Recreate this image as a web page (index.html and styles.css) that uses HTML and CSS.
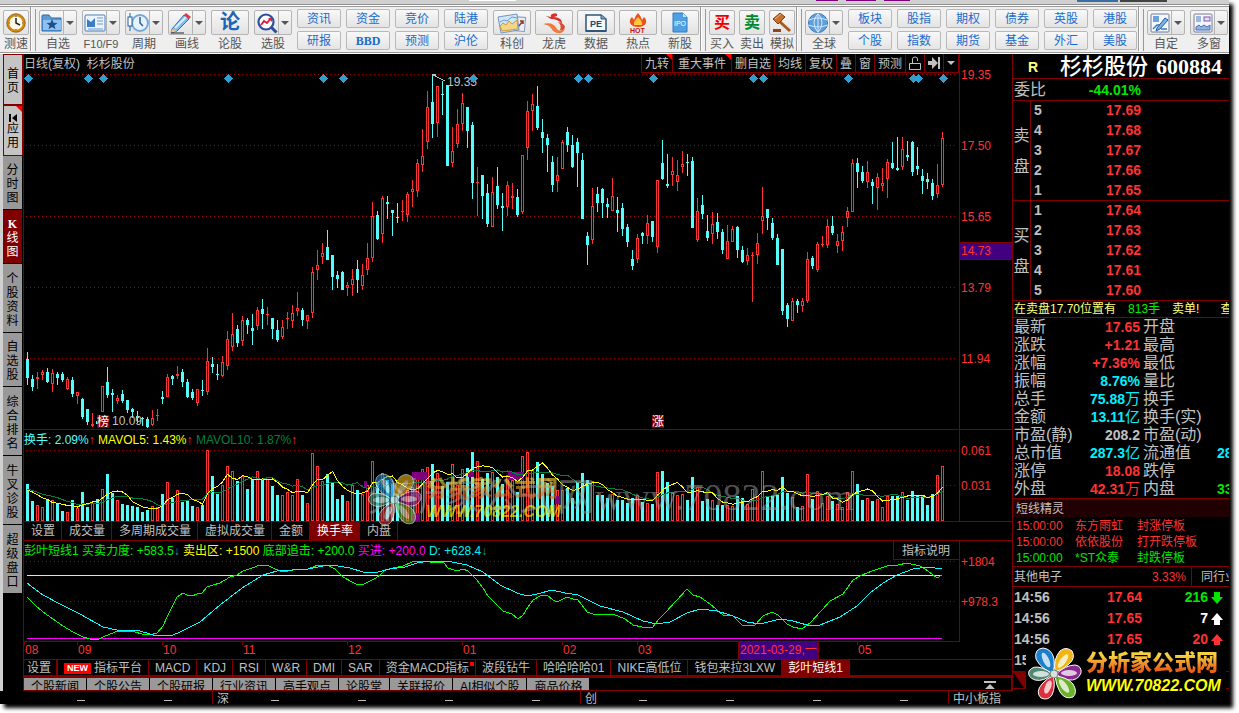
FILE: index.html
```html
<!DOCTYPE html>
<html lang="zh-CN">
<head>
    <meta charset="UTF-8">
    <meta name="viewport" content="width=device-width, initial-scale=1.0">
    <title>杉杉股份 600884</title>
    <link rel="stylesheet" href="styles.css">
</head>
<body>
<div class="window">
    <div class="strip"></div>

    <header class="toolbar">
        <button class="tool narrow">
            <span class="tool-face"><svg width="20" height="20" viewBox="0 0 20 20"><circle cx="10" cy="10" r="8" fill="#fffbe8" stroke="#d08a10" stroke-width="2.5"/><circle cx="10" cy="10" r="9.3" fill="none" stroke="#7a4a00" stroke-width=".7"/><path d="M10 5v5l4 2" fill="none" stroke="#222" stroke-width="1.5"/><path d="M10 3v1M10 16v1M3 10h1M16 10h1" stroke="#555"/></svg></span>
            <span class="tool-label">测速</span>
        </button>
        <i class="sep"></i>
        <div class="tools">
            <button class="tool split">
                <span class="tool-face"><svg width="22" height="20" viewBox="0 0 22 20"><path d="M1 3q0-1 1-1h6l2 3h10v13H1z" fill="#5b9bd8" stroke="#2b68ab"/><path d="M2 7h18v10H2z" fill="#8fc1ee"/><path d="M11 6l1.5 3.7 4 .2-3.1 2.5 1.1 3.9-3.500-2.200-3.500 2.200 1.100-3.900-3.100-2.500 4-.2z" fill="#1e4f8c"/></svg></span>
                <span class="tool-label">自选</span>
            </button>
            <button class="tool split">
                <span class="tool-face"><svg width="22" height="20" viewBox="0 0 22 20"><rect x="1" y="2" width="20" height="16" rx="1" fill="#eaf4ff" stroke="#4a80bd"/><path d="M3 14V6l4 3 4-4v9z" fill="#3d7cc4"/><path d="M13 5h6M13 8h6M13 11h6M4 16h15" stroke="#7898bd"/></svg></span>
                <span class="tool-label latin">F10/F9</span>
            </button>
            <button class="tool split">
                <span class="tool-face"><svg width="22" height="22" viewBox="0 0 22 22"><circle cx="13" cy="11" r="8" fill="#e6f3ff" stroke="#76a9d8" stroke-width="2"/><path d="M13 5v6l3 3" fill="none" stroke="#2b5f98" stroke-width="1.5"/><path d="M3 1v18" stroke="#1f5fae"/><rect x="1" y="5" width="4" height="9" fill="#fff" stroke="#1f5fae"/></svg></span>
                <span class="tool-label">周期</span>
            </button>
            <button class="tool split">
                <span class="tool-face"><svg width="22" height="22" viewBox="0 0 22 22"><path d="M2 17L14 3l5 4L7 19l-6 2z" fill="#87bbea" stroke="#376da6"/><path d="M5 16L16 5" stroke="#d9efff" stroke-width="2"/><path d="M14 3l2-2 5 4-2 2z" fill="#e03a3a"/><path d="M2 17l5 2-6 2z" fill="#f0c890"/><path d="M1 21h13" stroke="#222"/></svg></span>
                <span class="tool-label">画线</span>
            </button>
            <button class="tool">
                <span class="tool-face glyph blue">论</span>
                <span class="tool-label">论股</span>
            </button>
            <button class="tool split">
                <span class="tool-face"><svg width="22" height="22" viewBox="0 0 22 22"><circle cx="10" cy="10" r="7.5" fill="#fff" stroke="#2b4fa0" stroke-width="2.2"/><path d="M15.5 15.5l5 5" stroke="#2b4fa0" stroke-width="3"/><path d="M5 13l3-4 3 2 4-5" fill="none" stroke="#d81e3a" stroke-width="2"/><path d="M12 6h4v4z" fill="#d81e3a"/></svg></span>
                <span class="tool-label">选股</span>
            </button>
        </div>
        <div class="links">
            <button>资讯</button><button>资金</button><button>竞价</button><button>陆港</button>
            <button>研报</button><button class="serif">BBD</button><button>预测</button><button>沪伦</button>
        </div>
        <div class="tools tight">
            <button class="tool">
                <span class="tool-face"><svg width="30" height="22" viewBox="0 0 30 22"><rect x="17" y="5" width="11" height="14" fill="#e8eef6" stroke="#8a9bb5" transform="rotate(5 22 12)"/><path d="M21 15l5-6m-3 0h3v3" fill="none" stroke="#8d3a2a" stroke-width="1.5"/><path d="M1 5l19-3 2 16-18 3z" fill="#cfe6fb" stroke="#7795bd"/><path d="M3 14l3-3 3 2 3-4 3 3 5-4 1 9-16 2z" fill="#f1d58b" stroke="#cf9a2c"/><path d="M3 10l4-2 3 1 5-4 5 1" fill="none" stroke="#6a9bd2"/></svg></span>
                <span class="tool-label">科创</span>
            </button>
            <button class="tool">
                <span class="tool-face"><svg width="26" height="22" viewBox="0 0 26 22"><path d="M11 2q6-2 5 2l-3 1q9 1 8 7-4-5-11-5l-5-3 5 1q-1-2 1-3z" fill="#d8312c"/><path d="M2 12q10-3 14 5 2 3 8 0-2 5-8 4-4-1-6-5-2-3-8-4z" fill="#ee7a3d"/><path d="M17 10q6 1 7 5-1 4-5 3 2-5-2-8z" fill="#df4a2f"/></svg></span>
                <span class="tool-label">龙虎</span>
            </button>
            <button class="tool">
                <span class="tool-face"><svg width="24" height="20" viewBox="0 0 24 20"><path d="M2 2h15l5 4v12H2z" fill="#f4f8fd" stroke="#2f5578" stroke-width="1.5"/><path d="M17 2v4h5" fill="#7fa4c7" stroke="#2f5578"/><path d="M2 17h20v2H2z" fill="#2f5578"/><text x="6" y="14" font-family="Liberation Sans" font-weight="bold" font-size="9" fill="#21496f">PE</text></svg></span>
                <span class="tool-label">数据</span>
            </button>
            <button class="tool">
                <span class="tool-face"><svg width="22" height="22" viewBox="0 0 22 22"><path d="M3 11q-1-3 2-6l2 3q1-4 4-7 3 3 4 7l2-3q3 3 2 6-2 4-8 4t-8-4z" fill="#ee4f1d"/><path d="M7 13q-1-3 4-8 5 5 4 8z" fill="#ffc93c"/><text x="3" y="21" font-family="Liberation Sans" font-weight="bold" font-size="7" fill="#c81414">HOT</text></svg></span>
                <span class="tool-label">热点</span>
            </button>
            <button class="tool">
                <span class="tool-face"><svg width="18" height="22" viewBox="0 0 18 22"><path d="M2 1h10l4 4v15H2z" fill="#4f9fe2" stroke="#2c7cc4"/><path d="M12 1v4h4z" fill="#c6e2fa"/><text x="3" y="14" font-family="Liberation Sans" font-size="7" fill="#fff">IPO</text></svg></span>
                <span class="tool-label">新股</span>
            </button>
        </div>
        <i class="sep"></i>
        <div class="tools tight">
            <button class="tool narrow"><span class="tool-face glyph red">买</span><span class="tool-label">买入</span></button>
            <button class="tool narrow"><span class="tool-face glyph green">卖</span><span class="tool-label">卖出</span></button>
            <button class="tool narrow">
                <span class="tool-face"><svg width="22" height="22" viewBox="0 0 22 22"><path d="M9 8l11 10-2 2L7 10z" fill="#a85a1c"/><path d="M2 7l7-6 5 4-7 7z" fill="#c6702c" stroke="#7e3d10"/><path d="M4 7l6-5" stroke="#f0b27c"/><path d="M2 17h8v3H2z" fill="#8f4716"/></svg></span>
                <span class="tool-label">模拟</span>
            </button>
        </div>
        <i class="sep"></i>
        <div class="tools">
            <button class="tool split">
                <span class="tool-face"><svg width="22" height="22" viewBox="0 0 22 22"><circle cx="11" cy="11" r="9.5" fill="#5e9fdc" stroke="#3a78b8"/><path d="M2 8q9-4 18 0M1.5 13q9.5 4 19 0M11 1.5q-8 9 0 19M11 1.5q8 9 0 19M11 2v18" fill="none" stroke="#d6ebff"/></svg></span>
                <span class="tool-label">全球</span>
            </button>
        </div>
        <div class="links wide">
            <button>板块</button><button>股指</button><button>期权</button><button>债券</button><button>英股</button><button>港股</button>
            <button>个股</button><button>指数</button><button>期货</button><button>基金</button><button>外汇</button><button>美股</button>
        </div>
        <i class="sep"></i>
        <div class="tools">
            <button class="tool split">
                <span class="tool-face"><svg width="20" height="20" viewBox="0 0 20 20"><rect x="1" y="1" width="18" height="18" rx="1" fill="#f4f8fd" stroke="#6b7f99"/><rect x="3" y="3" width="6" height="6" fill="#6ba4de"/><path d="M3 16l4-4h3M11 16h6" fill="none" stroke="#3a78c0" stroke-width="1.5"/><path d="M7 15l8-10 3 2-8 9-4 2z" fill="#7ab2ea" stroke="#245a9a"/></svg></span>
                <span class="tool-label">自定</span>
            </button>
            <button class="tool split">
                <span class="tool-face"><svg width="20" height="20" viewBox="0 0 20 20"><rect x="1" y="1" width="18" height="18" rx="1" fill="#f4f4fb" stroke="#7b7f92"/><path d="M3 4h5M3 6h5M3 8h5" stroke="#4b78c0"/><rect x="11" y="4" width="6" height="4" fill="#e8dcf4" stroke="#7a5aa8"/><path d="M3 17v-3l3-2 2 2 3-2 3 2 3-2v5z" fill="#8fb4e4" stroke="#4b6fb4"/></svg></span>
                <span class="tool-label">多窗</span>
            </button>
        </div>
    </header>

    <main class="main">
        <nav class="side">
            <button class="side-tab light h2"><span>首页</span></button>
            <button class="side-tab light h2 flagged"><svg width="8" height="8" viewBox="0 0 8 8"><path d="M0 0h2v8H0zM8 0v8L3 4z"/></svg><span>应用</span></button>
            <button class="side-tab h3"><span>分时图</span></button>
            <button class="side-tab h3 active"><span><b>K</b>线图</span></button>
            <button class="side-tab h4"><span>个股资料</span></button>
            <button class="side-tab h3"><span>自选股</span></button>
            <button class="side-tab h4"><span>综合排名</span></button>
            <button class="side-tab h4"><span>牛叉诊股</span></button>
            <button class="side-tab h4"><span>超级盘口</span></button>
        </nav>

        <section class="charts">
            <div class="pane price">
                <div class="plot">
                    <div class="pane-head">
                        <span class="title">日线(复权) &nbsp;杉杉股份</span>
                        <div class="chart-tools">
                            <button class="flagged">九转</button><button class="flagged roomy">重大事件</button><button>删自选</button><button>均线</button><button>复权</button><button>叠</button><button>窗</button><button>预测</button>
                            <button aria-label="锁定"><svg width="12" height="15" viewBox="0 0 12 15"><path d="M.5 7.500h11v6H.5zM3.500 7V3q0-2 2.500-2t2.500 2v2" fill="none" stroke="#c0c0c0"/></svg></button>
                            <button aria-label="移到最后"><svg width="12" height="12" viewBox="0 0 12 12"><path d="M0 4h4V0l6 6-6 6V8H0zM10 0h2v12h-2z" fill="#c0c0c0"/></svg></button>
                            <button aria-label="更多"><svg width="8" height="5" viewBox="0 0 8 5"><path d="M0 0h8L4 4z" fill="#c0c0c0"/></svg></button>
                        </div>
                    </div>
                    <svg class="canvas" id="priceChart" viewBox="24 73 935 356" preserveAspectRatio="none"></svg>
                </div>
                <div class="axis">
                    <span>19.35</span><span>17.50</span><span>15.65</span><span>13.79</span><span>11.94</span>
                    <span class="cursor-price">14.73</span>
                </div>
            </div>

            <div class="pane volume">
                <div class="plot">
                    <div class="pane-head">
                        <p class="legend"><span class="c-cyan">换手: 2.09%<b>↑</b></span> <span class="c-yellow">MAVOL5: 1.43%<b>↑</b></span> <span class="c-dark">MAVOL10: 1.87%<b>↑</b></span></p>
                    </div>
                    <svg class="canvas" id="volumeChart" viewBox="24 449 935 72" preserveAspectRatio="none"></svg>
                    <div class="big-mark">分析家公式网<i>www.70822.com</i></div>
                    <div class="logo faded">
                        <svg width="56" height="56" viewBox="0 0 56 56"><use href="#flower"/></svg>
                        <div><strong>分析家公式网</strong><em>WWW.70822.COM</em></div>
                    </div>
                </div>
                <div class="axis"><span>0.061</span><span>0.031</span></div>
            </div>

            <div class="tabs vol-tabs">
                <button>设置</button><button>成交量</button><button>多周期成交量</button><button>虚拟成交量</button><button>金额</button><button class="active">换手率</button><button>内盘</button>
            </div>

            <div class="pane indicator">
                <div class="plot">
                    <div class="pane-head">
                        <p class="legend"><span class="c-green">彭叶短线1 买卖力度: +583.5<u>↓</u></span> <span class="c-yellow">卖出区: +1500</span> <span class="c-green">底部追击: +200.0</span> <span class="c-magenta">买进: +200.0</span> <span class="c-aqua">D: +628.4<u>↓</u></span></p>
                        <button class="explain">指标说明</button>
                    </div>
                    <svg class="canvas" id="indicatorChart" viewBox="24 560 935 81" preserveAspectRatio="none"></svg>
                </div>
                <div class="axis"><span>+1804</span><span>+978.3</span></div>
            </div>

            <div class="dates" id="dates"></div>

            <div class="tabs ind-tabs">
                <button class="first">设置</button><button><mark>NEW</mark>指标平台</button><button>MACD</button><button>KDJ</button><button>RSI</button><button>W&amp;R</button><button>DMI</button><button>SAR</button><button class="dot">资金MACD指标</button><button>波段钻牛</button><button>哈哈哈哈01</button><button>NIKE高低位</button><button>钱包来拉3LXW</button><button class="active">彭叶短线1</button>
            </div>

            <div class="news-tabs">
                <button>个股新闻</button><button>个股公告</button><button>个股研报</button><button>行业资讯</button><button>高手观点</button><button>论股堂</button><button>关联报价</button><button>AI相似个股</button><button>商品价格</button>
                <svg class="expand" width="12" height="10" viewBox="0 0 12 10"><path d="M0 0h12v2H0zM6 3l5 5H1z" fill="#c0c0c0"/></svg>
            </div>
        </section>

        <aside class="quote">
            <h1><small>R</small><span>杉杉股份</span> <b>600884</b></h1>
            <div class="ratio"><span>委比</span><b>-44.01%</b></div>
            <table class="book">
                <tbody>
                    <tr><th rowspan="5">卖<br>盘</th><td>5</td><td>17.69</td><td></td></tr>
                    <tr><td>4</td><td>17.68</td><td></td></tr>
                    <tr><td>3</td><td>17.67</td><td></td></tr>
                    <tr><td>2</td><td>17.66</td><td></td></tr>
                    <tr><td>1</td><td>17.65</td><td></td></tr>
                </tbody>
                <tbody>
                    <tr><th rowspan="5">买<br>盘</th><td>1</td><td>17.64</td><td></td></tr>
                    <tr><td>2</td><td>17.63</td><td></td></tr>
                    <tr><td>3</td><td>17.62</td><td></td></tr>
                    <tr><td>4</td><td>17.61</td><td></td></tr>
                    <tr><td>5</td><td>17.60</td><td></td></tr>
                </tbody>
            </table>
            <div class="ticker"><span>在卖盘17.70位置有</span><span class="c-green">813手</span><span>卖单!</span><span class="last">查</span></div>
            <table class="stats">
                <tr><th>最新</th><td class="up">17.65</td><th>开盘</th><td></td></tr>
                <tr><th>涨跌</th><td class="up">+1.21</td><th>最高</th><td></td></tr>
                <tr><th>涨幅</th><td class="up">+7.36%</td><th>最低</th><td></td></tr>
                <tr><th>振幅</th><td class="aqua">8.76%</td><th>量比</th><td></td></tr>
                <tr><th>总手</th><td class="aqua">75.88<i>万</i></td><th>换手</th><td></td></tr>
                <tr><th>金额</th><td class="aqua">13.11<i>亿</i></td><th>换手(实)</th><td></td></tr>
                <tr><th>市盈(静)</th><td>208.2</td><th>市盈(动)</th><td></td></tr>
                <tr><th>总市值</th><td class="aqua">287.3<i>亿</i></td><th>流通值</th><td class="aqua cut">287.3</td></tr>
                <tr><th>涨停</th><td class="up">18.08</td><th>跌停</th><td></td></tr>
                <tr><th>外盘</th><td class="up">42.31<i>万</i></td><th>内盘</th><td class="down cut">33.57</td></tr>
            </table>
            <h2>短线精灵</h2>
            <ul class="alerts">
                <li><span>15:00:00</span><span>东方雨虹</span><span>封涨停板</span></li>
                <li><span>15:00:00</span><span>依依股份</span><span>打开跌停板</span></li>
                <li class="down"><span>15:00:00</span><span>*ST众泰</span><span>封跌停板</span></li>
            </ul>
            <div class="sector"><span>其他电子</span><b>3.33%</b><span class="peers">同行业</span></div>
            <table class="trades">
                <tr><td>14:56</td><td class="up">17.64</td><td class="down">216</td><td><svg width="12" height="12" viewBox="0 0 12 12"><path d="M3 0h6v5h3l-6 7-6-7h3z" fill="#00e600"/></svg></td></tr>
                <tr><td>14:56</td><td class="up">17.65</td><td class="white">7</td><td><svg width="12" height="12" viewBox="0 0 12 12"><path d="M3 12h6V7h3L6 0 0 7h3z" fill="#fff"/></svg></td></tr>
                <tr><td>14:56</td><td class="up">17.65</td><td class="up">20</td><td><svg width="12" height="12" viewBox="0 0 12 12"><path d="M3 12h6V7h3L6 0 0 7h3z" fill="#ff3232"/></svg></td></tr>
                <tr><td>15:00</td><td></td><td></td><td></td></tr>
            </table>
            <div class="quote-foot"><svg width="20" height="17" viewBox="0 0 20 17"><path d="M0 0h20v16h-9z" fill="#800000"/></svg></div>
        </aside>
    </main>

    <footer class="status">
        <div></div>
        <div><span>深</span></div>
        <div><span>创</span></div>
        <div><span>中小板指</span></div>
    </footer>

    <div class="logo corner">
        <svg width="56" height="56" viewBox="0 0 56 56">
            <g id="flower" stroke="#fff" stroke-width="1">
                <path d="M27 27Q16 24 10 13 8 3 17 2q9 1 11 11 1 8-1 14z" fill="#1c7fcb"/>
                <path d="M29 26Q27 13 34 5q6-5 12 0 4 7-3 13-6 6-14 8z" fill="#f0b616"/>
                <path d="M30 28q10-9 19-9 7 1 6 8-3 8-13 7-7-1-12-6z" fill="#8a2a90"/>
                <path d="M29 30q12 1 18 8 5 8 0 13-8 3-13-5-4-7-5-16z" fill="#6bb22c"/>
                <path d="M27 30q3 10-1 19-4 6-11 3-6-6 1-14 5-6 11-8z" fill="#d8323e"/>
                <path d="M26 28q-8 8-17 6-8-3-6-9 4-6 13-3 6 2 10 6z" fill="#4f8674"/>
                <g fill="#fff" fill-opacity=".75" stroke="none">
                    <ellipse cx="20" cy="14" rx="3" ry="8" transform="rotate(-25 20 14)"/>
                    <ellipse cx="37" cy="15" rx="3" ry="8" transform="rotate(35 37 15)"/>
                    <ellipse cx="43" cy="27" rx="8" ry="3"/>
                    <ellipse cx="38" cy="40" rx="3" ry="8" transform="rotate(-35 38 40)"/>
                    <ellipse cx="22" cy="41" rx="3" ry="7" transform="rotate(22 22 41)"/>
                    <ellipse cx="15" cy="28" rx="8" ry="3"/>
                </g>
                <circle cx="28" cy="28" r="4" fill="#ddd" stroke="#6a8a72"/>
            </g>
        </svg>
        <div><strong>分析家公式网</strong><em>WWW.70822.COM</em></div>
    </div>
</div>
<script src="script.js"></script>
</body>
</html>
```

FILE: styles.css
```css
* {
    box-sizing: border-box;
}
body {
    margin: 0;
    padding: 0 10px 9px 0;
    background: #fff;
    font-family: "Liberation Sans", "Noto Sans CJK SC", sans-serif;
    font-size: 12px;
    color: #c0c0c0;
    overflow: hidden;
}
button {
    font: inherit;
    color: inherit;
    background: none;
    border: 0;
    padding: 0;
    margin: 0;
    white-space: nowrap;
    cursor: pointer;
}
.window {
    position: relative;
    display: flex;
    flex-direction: column;
    min-height: calc(100vh - 9px);
    background: #000;
    box-shadow: 4px 4px 4px #000;
}

/* top */
.strip {
    height: 5px;
    border-bottom: 1px solid #909090;
    background:
        linear-gradient(#fff, #fff) 469px 0 / 47px 1px no-repeat,
        linear-gradient(#800080, #800080) 816px 0 / 22px 1px no-repeat,
        linear-gradient(#800080, #800080) 846px 0 / 30px 1px no-repeat,
        linear-gradient(#800080, #800080) 884px 0 / 26px 1px no-repeat,
        linear-gradient(#3a6ea5, #3a6ea5) 1077px 0 / 41px 2px no-repeat,
        linear-gradient(#444, #444) 1120px 0 / 47px 2px no-repeat,
        #d0d0d0;
}
.toolbar {
    display: flex;
    height: 49px;
    padding: 3px 1px 0 3px;
    border-top: 1px solid #fff;
    border-bottom: 1px solid #fff;
    box-shadow: inset 0 1px #999, inset 0 -1px #999;
    background: #efefef;
    color: #555;
}
.tools {
    display: flex;
    gap: 5px;
    flex: none;
}
.tools.tight {
    gap: 4px;
}
.tool {
    width: 38px;
    display: flex;
    flex-direction: column;
    align-items: center;
    padding-top: 1px;
    flex: none;
}
.tool.narrow {
    width: 26px;
}
.tool-face {
    display: flex;
    align-items: center;
    justify-content: center;
    width: 100%;
    height: 25px;
    border: 1px solid #b4b4b4;
    border-radius: 2px;
    background: linear-gradient(#f8f8f8, #e2e2e2);
}
.split .tool-face {
    padding-right: 13px;
    position: relative;
}
.split .tool-face svg {
    flex: none;
}
.split .tool-face::before {
    content: "";
    position: absolute;
    right: 12px;
    top: 0;
    bottom: 0;
    border-left: 1px solid #b4b4b4;
}
.split .tool-face::after {
    content: "";
    position: absolute;
    right: 2px;
    top: 10px;
    border: 4px solid transparent;
    border-top-color: #555;
}
.tool-label {
    line-height: 18px;
}
.tool-label.latin {
    font-size: 11px;
}
.glyph {
    font-size: 16px;
    font-weight: bold;
    line-height: 23px;
}
.glyph.blue { color: #1d63b8; font-size: 20px; }
.glyph.red { color: #f00000; }
.glyph.green { color: #008a2a; }
.sep {
    flex: none;
    width: 10px;
    height: 44px;
    margin-top: -2px;
    background:
        linear-gradient(#999, #999) 1px 0 / 1px 100% no-repeat,
        linear-gradient(#fff, #fff) 2px 0 / 1px 100% no-repeat,
        linear-gradient(#999, #999) 6px 2px / 1px 100% no-repeat;
}
.links {
    display: grid;
    grid-template-columns: repeat(4, 44px);
    grid-template-rows: 19px 19px;
    gap: 3px 5px;
    margin: 0 5px;
}
.links.wide {
    grid-template-columns: repeat(6, 44px);
    margin-right: 0;
}
.links button {
    border: 1px solid #b8b8b8;
    border-radius: 2px;
    background: linear-gradient(#f8f8f8, #e4e4e4);
    color: #1a6bcc;
    line-height: 18px;
}
.links .serif {
    font-family: "Liberation Serif", serif;
    font-weight: bold;
}

/* middle */
.main {
    flex: 1;
    display: grid;
    grid-template-columns: 23px 1fr 217px;
}
.side {
    border-left: 3px solid #d0d0d0;
    display: flex;
    flex-direction: column;
}
.side-tab {
    position: relative;
    width: 19px;
    border-bottom: 1px solid #000;
    background: #999;
    color: #000;
    line-height: 14px;
    display: flex;
    flex-direction: column;
    align-items: center;
    justify-content: center;
    white-space: normal;
    padding-top: 3px;
}
.side-tab span {
    width: 12px;
    word-break: break-all;
}
.side-tab b {
    font-family: "Liberation Serif", serif;
}
.side-tab.h2 { height: 51px; }
.side-tab.h3 { height: 54px; }
.side-tab.h4 { height: 69px; }
.side-tab.light {
    background: #c4c4c4;
    border: 1px solid #800000;
    width: 20px;
}
.side-tab.active {
    background: #800000;
    color: #fff;
}
.flagged {
    position: relative;
}
.flagged::after {
    content: "";
    position: absolute;
    right: 0;
    top: 0;
    border: 3px solid #f00;
    border-left-color: transparent;
    border-bottom-color: transparent;
}

.charts {
    border-left: 1px solid #800000;
    display: flex;
    flex-direction: column;
    min-width: 0;
}
.pane {
    display: grid;
    grid-template-columns: 1fr 53px;
    border-bottom: 1px solid #800000;
}
.plot {
    position: relative;
    display: flex;
    flex-direction: column;
    min-width: 0;
}
.canvas {
    display: block;
    width: 100%;
    flex: 1 1 0;
    min-height: 0;
    shape-rendering: crispEdges;
}
.canvas text {
    font-size: 12px;
}
.pane-head {
    height: 19px;
    display: flex;
    justify-content: space-between;
    line-height: 21px;
    white-space: nowrap;
}
.price { flex: 1 0 376px; }
.volume { height: 92px; }
.indicator { height: 101px; border-bottom: 0; }
.indicator .plot { border-bottom: 1px solid #800000; }
.axis {
    position: relative;
    border-left: 1px solid #800000;
    padding: 13px 0 0 1px;
    color: #ff3232;
    line-height: 16px;
}
.axis span {
    display: block;
}
.price .axis {
    padding-bottom: 7px;
    display: grid;
    grid-template-rows: repeat(5, 1fr);
}
.volume .axis span + span { margin-top: 19px; }
.indicator .axis span + span { margin-top: 24px; }
.axis .cursor-price {
    position: absolute;
    top: 50%;
    left: 0;
    right: 0;
    padding-left: 1px;
    background: #400080;
    border: 1px solid #800000;
    border-width: 1px 0;
}
.chart-tools {
    display: flex;
    border-right: 1px solid #800000;
}
.chart-tools button {
    border-left: 1px solid #800000;
    border-bottom: 1px solid #800000;
    padding: 0 3px;
    line-height: 20px;
}
.chart-tools button svg {
    display: block;
}
.chart-tools .roomy {
    padding: 0 5px;
}
.legend { margin: 0; }
.legend b { color: #ff3232; font-weight: normal; }
.legend u { color: #2f9f9f; text-decoration: none; }
.c-cyan { color: #54fcfc; }
.c-yellow { color: #ff0; }
.c-dark { color: #008040; }
.c-green { color: #00f000; }
.c-magenta { color: #f0f; }
.c-aqua { color: #00f0f0; }

.big-mark {
    position: absolute;
    left: 343px;
    top: 44px;
    font-size: 38px;
    line-height: 46px;
    white-space: nowrap;
    color: rgba(160, 160, 160, .5);
    pointer-events: none;
}
.big-mark i {
    font-family: "Liberation Serif", serif;
    font-style: normal;
}

.tabs {
    display: flex;
    line-height: 19px;
    border-bottom: 1px solid #800000;
}
.tabs button {
    border-right: 1px solid #800000;
    padding: 0 6px;
}
.tabs .active {
    background: #800000;
    color: #fff;
}
.vol-tabs { height: 19px; }
.vol-tabs button { padding-left: 7px; }
.ind-tabs {
    height: 19px;
    border-top: 1px solid #800000;
    border-bottom: 3px solid #800000;
    line-height: 17px;
}
.ind-tabs .first { padding: 0 5px 0 3px; border-right-width: 2px; }
.ind-tabs mark {
    display: inline-block;
    background: #f00;
    color: #fff;
    font-size: 9px;
    line-height: 11px;
    padding: 0 3px;
    margin-right: 3px;
    vertical-align: 1px;
    font-weight: bold;
}
.ind-tabs .dot { position: relative; }
.ind-tabs .dot::after {
    content: "";
    position: absolute;
    top: 2px;
    right: 1px;
    width: 4px;
    height: 4px;
    background: #f00;
}
.explain {
    border: 1px solid #800000;
    border-width: 0 0 1px 1px;
    padding: 0 9px 0 8px;
}
.dates {
    position: relative;
    height: 17px;
    color: #ff3232;
    line-height: 17px;
}
.dates span {
    position: absolute;
    padding-left: 1px;
}
.dates span::before {
    content: "";
    position: absolute;
    left: 0;
    top: 0;
    height: 3px;
    border-left: 1px solid #800000;
}
.dates .picked {
    background: #400080;
    border: 1px solid #800000;
    border-width: 0 1px;
    width: 81px;
    white-space: nowrap;
    overflow: hidden;
}
.news-tabs {
    height: 13px;
    display: flex;
    overflow: hidden;
    border-bottom: 1px solid #800000;
    border-right: 1px solid #800000;
}
.news-tabs button {
    height: 18px;
    line-height: 17px;
    background: #999;
    color: #000;
    border-right: 1px solid #000;
    padding: 0 7px;
}
.expand {
    margin: 3px 15px 0 auto;
}

/* quote panel */
.quote {
    border-left: 1px solid #800000;
    overflow: hidden;
    min-width: 0;
}
.quote h1 {
    margin: 0;
    height: 24px;
    display: flex;
    align-items: center;
    padding: 2px 0 0 15px;
    font-size: 22px;
    font-weight: 500;
    line-height: 22px;
    color: #fff;
    white-space: nowrap;
}
.quote h1 small {
    width: 32px;
    font-size: 14px;
    font-weight: bold;
    color: #ffff80;
}
.quote h1 b {
    font-family: "Liberation Serif", serif;
    padding-left: 8px;
}
.ratio {
    height: 22px;
    display: flex;
    border-top: 1px solid #800000;
    line-height: 22px;
    padding-left: 1px;
    font-size: 16px;
}
.ratio b {
    flex: 0 0 95px;
    text-align: right;
    font-size: 14px;
    color: #00e600;
}
.quote table {
    border-spacing: 0;
    table-layout: fixed;
    width: 100%;
}
.quote th {
    font-weight: normal;
    font-size: 16px;
    padding: 0;
    text-align: left;
    white-space: nowrap;
}
.quote td {
    padding: 0;
    font-size: 14px;
    font-weight: bold;
}
.quote .up { color: #ff3232; }
.quote .down { color: #00e600; }
.quote .aqua { color: #00f0ff; }
.quote .white { color: #fff; }
.book tr { height: 20px; }
.book td { line-height: 19px; }
.book th {
    width: 18px;
    line-height: 31px;
    text-align: center;
    border-right: 1px solid #800000;
}
.book tr:first-child > * { border-top: 1px solid #800000; }
.book td:nth-last-child(3) {
    width: 70px;
    padding-left: 3px;
}
.book td:nth-last-child(2) {
    width: 40px;
    color: #ff3232;
    text-align: right;
}
.ticker {
    height: 17px;
    display: flex;
    gap: 12px;
    padding-left: 1px;
    border-top: 1px solid #800000;
    color: #ffff80;
    line-height: 16px;
    white-space: nowrap;
}
.ticker .last { margin-left: 9px; }
.stats {
    border-top: 1px solid #800000;
}
.stats tr { height: 18px; }
.stats th, .stats td { line-height: 18px; }
.stats th { width: 60px; padding-left: 1px; }
.stats td:nth-child(2) {
    width: 68px;
    text-align: right;
    padding-right: 1px;
}
.stats th:nth-child(3) { width: 76px; padding-left: 2px; }
.stats .cut { overflow: hidden; }
.stats i {
    font-style: normal;
    font-weight: normal;
    font-size: 15px;
}
.quote h2 {
    margin: 0;
    height: 19px;
    border-top: 1px solid #800000;
    background: #200000;
    font-size: 12px;
    font-weight: normal;
    line-height: 20px;
    padding-left: 3px;
}
.alerts {
    margin: 0;
    padding: 1px 0 0 3px;
    list-style: none;
    color: #ff3232;
}
.alerts li {
    display: grid;
    grid-template-columns: 59px 62px 1fr;
    line-height: 16px;
    white-space: nowrap;
}
.sector {
    height: 20px;
    display: flex;
    border-top: 1px solid #800000;
    line-height: 20px;
    padding-left: 1px;
    white-space: nowrap;
}
.sector b {
    flex: 1;
    text-align: right;
    padding-right: 5px;
    font-weight: normal;
    color: #ff3232;
}
.sector .peers {
    width: 38px;
    border-left: 1px solid #800000;
    padding-left: 9px;
    overflow: hidden;
}
.trades {
    border-top: 1px solid #800000;
    border-bottom: 1px solid #800000;
}
.trades tr { height: 21px; }
.trades td { line-height: 21px; text-align: right; }
.trades td:first-child { width: 50px; text-align: left; padding-left: 1px; }
.trades td:nth-child(2) { width: 79px; }
.trades td:nth-child(3) { width: 66px; }
.trades td:nth-child(4) { text-align: left; padding-left: 3px; }
.trades svg { display: block; }
.quote-foot { height: 17px; border-bottom: 1px solid #800000; }
.quote-foot svg { display: block; }

/* index bar, every cell is 368px and the first one is scrolled half out */
.status {
    height: 13px;
    display: flex;
    overflow: hidden;
}
.status div {
    flex: 0 0 368px;
    line-height: 17px;
    border-left: 1px solid #800000;
    padding-left: 4px;
    background:
        linear-gradient(#c0c0c0, #c0c0c0) 58px 9px / 8px 1px no-repeat,
        linear-gradient(#c0c0c0, #c0c0c0) 145px 9px / 8px 1px no-repeat,
        linear-gradient(#c0c0c0, #c0c0c0) 232px 9px / 8px 1px no-repeat,
        linear-gradient(#c0c0c0, #c0c0c0) 319px 9px / 8px 1px no-repeat;
}
.status div:first-child { margin-left: -156px; }
.status div:last-child { background: none; }

/* site mark */
.logo {
    position: absolute;
    display: flex;
    align-items: center;
    gap: 4px;
    height: 57px;
    line-height: 23px;
    white-space: nowrap;
}
.logo strong {
    display: block;
    font-size: 22px;
    font-weight: 900;
    background: linear-gradient(#f6d040 20%, #e8641c 80%);
    -webkit-background-clip: text;
    background-clip: text;
    color: transparent;
}
.logo em {
    display: block;
    font-size: 16px;
    font-weight: bold;
    color: #ff0;
}
.logo.corner {
    right: 3px;
    bottom: 2px;
    width: 200px;
    background: #000;
}
.logo.faded {
    left: 342px;
    top: 41px;
    opacity: .6;
}
```

FILE: script.js
```javascript
const NS = 'http://www.w3.org/2000/svg';
const FIRST_X = 27;
const STEP = 5;

// u = up / d = down, then high, body top, body bottom, low
const candles = `
d352,359,378,385 d375,379,387,391 u372,377,379,389 u370,372,375,380 d368,372,382,383 u369,373,384,392 d372,374,378,385 d372,374,380,382 u377,379,389,390 d377,380,394,397
u392,392,396,404 d398,399,417,419 d409,409,422,425 u413,424,426,427 d420,421,424,425 u386,386,412,412 d367,382,395,398 d389,393,395,412 u395,398,401,404 d390,394,401,403
d400,400,410,413 d408,409,412,418 d411,416,418,423 d417,418,419,426 d417,419,427,428 u410,418,425,426 u409,415,416,421 d391,397,399,404 u374,377,397,397 d375,376,379,385
u366,374,376,379 d369,372,382,387 d379,382,397,398 d389,392,398,400 u389,389,403,406 d380,390,391,396 u348,361,392,395 d357,364,367,373 d364,374,375,380 u356,362,376,377
u331,339,366,370 u313,334,347,351 d325,329,343,347 u316,320,341,346 d318,320,325,334 d314,328,331,345 u307,310,326,330 d299,309,314,329 u307,314,315,325 d318,318,329,339
d320,330,340,342 u320,327,337,339 u312,318,319,329 u305,313,321,328 u292,308,311,316 d308,310,320,326 u315,315,321,329 u267,272,313,318 u250,265,270,280 u243,253,257,264
d230,247,260,260 d255,255,277,290 d271,275,279,288 d271,272,290,290 u282,285,288,296 u269,279,285,296 d260,269,280,293 u264,275,286,290 u243,258,270,275 u202,216,258,262
d211,215,239,240 u196,198,234,243 d196,202,204,219 d210,210,213,236 d203,217,218,223 u200,211,212,221 u192,194,215,222 u180,189,192,207 u159,163,191,197 u129,156,165,172
u91,107,142,149 d76,102,124,138 u86,86,123,137 d81,94,95,115 d85,85,166,166 u127,151,163,167 u109,124,144,148 u93,103,124,131 d107,107,131,148 d122,125,183,199
u167,182,183,216 d175,175,196,219 d184,193,224,227 u177,192,227,227 d167,186,205,209 d193,206,208,231 u181,185,207,216 u183,196,198,209 d189,197,215,217 u155,155,212,214
u101,111,148,160 u94,104,111,131 d86,106,128,130 d119,132,138,153 d134,138,145,172 d156,162,185,192 u157,175,181,192 u140,142,169,169 d127,132,145,152 d135,145,167,168
d138,142,153,187 d153,160,219,219 d232,236,245,265 u188,206,240,244 d187,194,203,212 d188,189,203,218 d198,204,207,218 u178,196,211,211 d197,210,213,232 d203,208,229,236
d224,227,242,247 d250,259,266,270 u234,238,259,263 d232,233,236,244 u215,223,236,244 d221,221,237,242 u180,180,247,253 d140,163,179,180 d154,184,186,188 u157,171,175,186
u160,175,182,191 u151,164,167,173 d154,162,163,176 d157,161,228,228 u198,211,240,242 d195,205,214,219 d215,231,238,241 u212,224,234,244 d213,222,232,239 d229,232,250,254
u225,241,259,259 u226,229,242,242 d226,227,250,258 d246,250,262,263 u248,255,261,265 u252,255,256,302 u233,243,255,264 u187,216,221,234 d209,209,218,230 d218,223,238,240
d234,238,265,265 d249,249,311,315 d303,305,319,327 u298,301,321,321 d299,301,305,313 u298,301,306,312 u252,259,301,303 d256,258,266,269 u242,244,270,272 u236,244,245,247
u219,226,245,248 d216,226,233,235 u234,241,246,253 u226,232,241,251 u207,211,218,227 u159,163,212,212 d158,163,172,188 d166,172,181,183 u161,172,182,188 d179,182,186,204
u173,177,188,210 u168,183,186,191 u159,162,179,198 d142,163,168,169 d137,168,170,171 u137,149,167,170 d141,155,157,161 d141,142,172,176 d147,166,169,175 d169,176,181,194
d173,179,182,189 d179,183,196,200 u164,185,194,198 u132,138,185,187
`.trim().split(/\s+/).map(s => ({ up: s[0] === 'u', v: s.slice(1).split(',').map(Number) }));

const volumes = [
    37, 20, 16, 14, 21, 21, 17, 10, 9, 21, 13, 29, 14, 18, 22, 32, 47, 28, 21, 17,
    16, 15, 14, 9, 11, 15, 14, 27, 39, 23, 31, 19, 20, 15, 14, 16, 71, 45, 27, 36,
    55, 50, 40, 45, 32, 42, 50, 41, 42, 35, 26, 26, 29, 26, 42, 26, 18, 68, 55, 40,
    47, 38, 22, 26, 20, 36, 31, 27, 36, 60, 38, 48, 41, 38, 27, 27, 31, 34, 42, 52,
    54, 57, 48, 35, 39, 57, 36, 52, 53, 69, 60, 42, 48, 49, 44, 37, 46, 41, 29, 65,
    69, 51, 59, 47, 38, 35, 31, 31, 33, 23, 39, 48, 41, 40, 26, 26, 23, 27, 21, 21,
    18, 23, 26, 19, 18, 17, 49, 50, 39, 28, 26, 27, 21, 44, 34, 20, 22, 21, 16, 16,
    16, 15, 25, 23, 17, 32, 25, 50, 25, 25, 27, 44, 28, 24, 14, 15, 47, 22, 30, 18,
    25, 20, 17, 14, 29, 50, 37, 21, 23, 20, 22, 14, 25, 25, 25, 29, 21, 30, 25, 25,
    16, 27, 46, 55
];
// turnover before the first visible day, needed by the averages
const before = [33, 35, 34, 32, 30, 30, 30, 29, 29];

const force = '27,597 35,605 43,612 53,619 63,626 73,632 83,637 90,639 97,640 103,637 110,634 118,631 127,631 135,632 142,634 150,635 157,633 163,626 168,615 173,605 177,597 183,593 187,595 192,596 197,594 202,593 207,587 213,585 220,583 230,577 237,575 243,571 252,568 260,565 267,565 273,568 280,571 288,571 297,569 308,569 318,565 327,565 335,569 343,577 352,582 358,585 364,584 370,581 376,578 381,574 385,570 393,568 403,566 412,562 427,561 433,563 438,562 444,563 448,568 457,571 463,569 468,571 477,580 483,588 488,596 497,605 503,611 512,614 518,619 523,615 528,607 533,600 540,596 547,595 553,600 557,602 567,597 573,599 577,599 582,605 587,612 593,614 613,614 625,619 633,625 642,627 653,627 658,620 665,613 687,589 693,595 700,597 710,604 723,615 733,616 742,625 748,626 755,625 763,616 772,612 778,615 787,624 793,627 802,629 810,623 822,610 830,601 843,594 853,580 862,575 872,571 887,566 898,565 907,563 920,566 928,571 937,578 942,575';
const lineD = '27,583 43,595 60,604 80,614 103,627 117,630 137,630 153,635 170,636 178,633 200,622 220,605 242,588 263,575 277,571 308,569 328,565 338,566 350,568 363,572 378,572 390,569 405,567 417,563 430,561 447,561 467,565 483,572 500,585 517,593 527,596 537,594 552,590 565,593 578,595 600,606 623,612 643,621 657,624 670,622 687,613 700,609 717,611 733,616 747,622 760,624 780,619 793,621 807,625 820,625 840,617 857,606 870,593 883,583 897,575 913,569 927,567 942,569';

function add(parent, tag, attrs, text) {
    const el = document.createElementNS(NS, tag);
    for (const k in attrs) el.setAttribute(k, attrs[k]);
    if (text) el.textContent = text;
    parent.appendChild(el);
    return el;
}

function grid(svg, rows) {
    rows.forEach(y => add(svg, 'path', { d: `M26 ${y + 0.5}H958`, stroke: '#a00000', 'stroke-dasharray': '1 3' }));
}

function box(x, y, w, h) {
    return `M${x} ${y}h${w}v${h}h${-w}z`;
}

function drawPrice() {
    const svg = document.getElementById('priceChart');
    grid(svg, [74, 145, 216, 287, 358]);
    let cyan = '', red = '', hollow = '';
    candles.forEach((c, i) => {
        const x = FIRST_X + i * STEP;
        const [high, top, bottom, low] = c.v;
        if (!c.up) {
            cyan += box(x, high, 1, low - high) + box(x - 1, top, 3, bottom - top);
            return;
        }
        red += box(x, high, 1, top - high) + box(x, bottom, 1, low - bottom);
        if (bottom - top < 3) red += box(x - 1, top, 3, bottom - top);
        else hollow += box(x - 0.5, top + 0.5, 2, bottom - top - 1);
    });
    add(svg, 'path', { d: cyan, fill: '#54fcfc' });
    add(svg, 'path', { d: red, fill: '#ff3232' });
    add(svg, 'path', { d: hollow, fill: '#000', stroke: '#ff3232' });

    add(svg, 'path', { d: 'M433 75l12 6', stroke: '#c0c0c0' });
    add(svg, 'rect', { x: 432, y: 74, width: 4, height: 2, fill: '#c0c0c0' });
    add(svg, 'text', { x: 447, y: 86, fill: '#c0c0c0' }, '19.35');
    add(svg, 'text', { x: 112, y: 425, fill: '#c0c0c0' }, '10.09');
    [28, 88, 103, 228, 323, 343, 473, 578, 588, 653, 753, 763, 848, 913, 918, 943].forEach(x => {
        add(svg, 'path', { d: `M${x - 4} 78.5l4.5-4.5 4.5 4.5-4.5 4.5z`, fill: '#2f9fcf' });
    });
    [[97, '榜'], [652, '涨']].forEach(([x, s]) => {
        add(svg, 'rect', { x: x, y: 415, width: 12, height: 13, fill: '#800000' });
        add(svg, 'text', { x: x, y: 426, fill: '#fff' }, s);
    });
}

function average(n) {
    const all = before.concat(volumes);
    return volumes.map((v, i) => {
        const end = i + before.length + 1;
        const sum = all.slice(end - n, end).reduce((a, b) => a + b, 0);
        return `${FIRST_X + i * STEP + 0.5},${521 - sum / n}`;
    }).join(' ');
}

function drawVolume() {
    const svg = document.getElementById('volumeChart');
    grid(svg, [450, 485]);
    let cyan = '', red = '';
    volumes.forEach((v, i) => {
        const x = FIRST_X + i * STEP;
        if (candles[i].up) red += box(x - 0.5, 521.5 - v, 2, v - 1);
        else cyan += box(x - 1, 521 - v, 3, v);
    });
    add(svg, 'path', { d: cyan, fill: '#54fcfc' });
    add(svg, 'path', { d: red, fill: '#000', stroke: '#ff3232' });
    [[412, 472, 15, 8], [468, 472, 6, 5], [508, 472, 16, 8], [555, 496, 5, 8], [364, 481, 3, 7], [412, 513, 8, 8]].forEach(r => {
        add(svg, 'path', { d: box(...r), fill: '#800080' });
    });
    add(svg, 'polyline', { points: average(10), fill: 'none', stroke: '#008040' });
    add(svg, 'polyline', { points: average(5), fill: 'none', stroke: '#ff0' });
}

function drawIndicator() {
    const svg = document.getElementById('indicatorChart');
    grid(svg, [561, 601]);
    add(svg, 'path', { d: 'M27 575.5H942', stroke: '#ff0' });
    add(svg, 'path', { d: 'M27 638.5H942', stroke: '#f0f' });
    add(svg, 'polyline', { points: force, fill: 'none', stroke: '#0f0' });
    add(svg, 'polyline', { points: lineD, fill: 'none', stroke: '#0ff' });
}

function drawDates() {
    const row = document.getElementById('dates');
    const months = [[0, '08'], [53, '09'], [138, '10'], [218, '11'], [323, '12'], [438, '01'], [538, '02'], [613, '03'], [714, '2021-03-29,一'], [833, '05']];
    months.forEach(([x, s]) => {
        const el = document.createElement('span');
        el.textContent = s;
        el.style.left = x / 988 * 100 + '%';
        if (s.length > 2) el.className = 'picked';
        row.appendChild(el);
    });
}

drawPrice();
drawVolume();
drawIndicator();
drawDates();
```
